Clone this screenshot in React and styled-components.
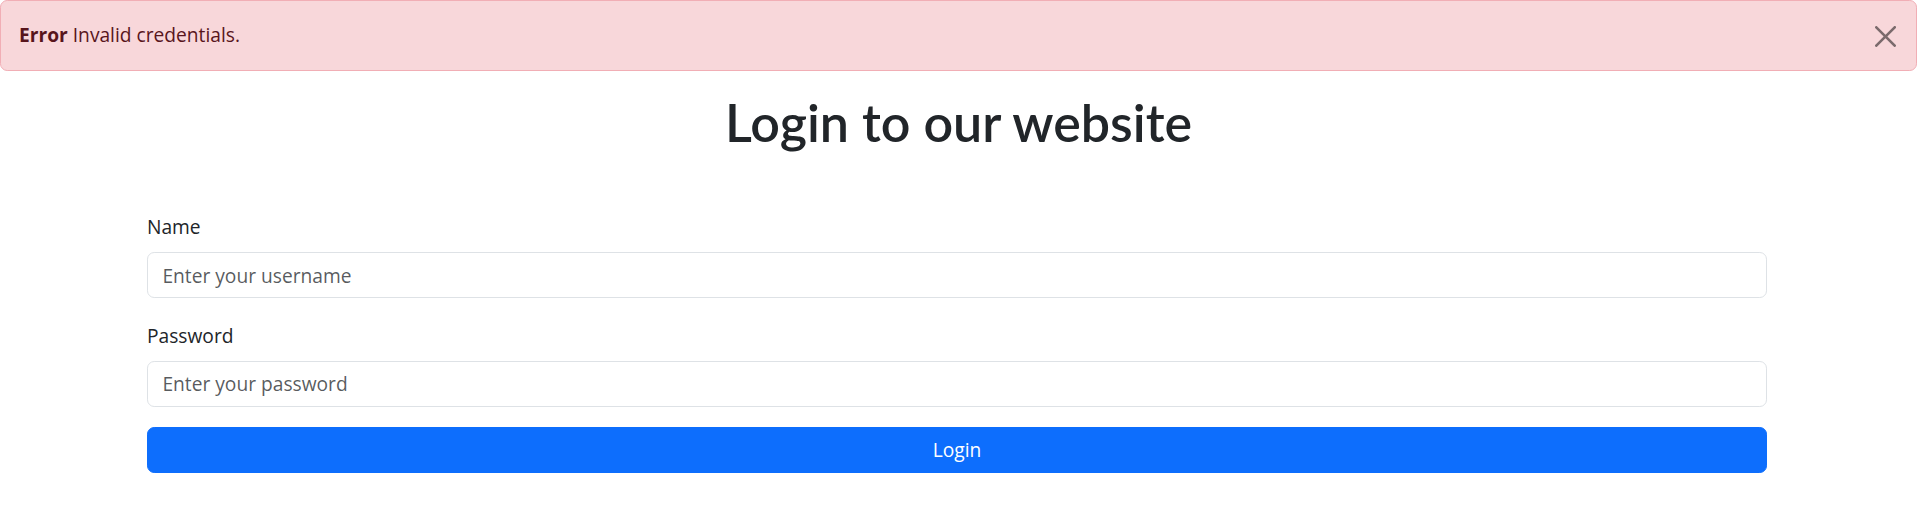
import React from 'react';
import styled, { createGlobalStyle } from 'styled-components';

const GlobalStyle = createGlobalStyle`
  * { box-sizing: border-box; }
  body {
    margin: 0;
    background: #fff;
    color: #212529;
    font-family: 'Open Sans', 'Noto Sans', sans-serif;
    font-size: 19.2px;
    line-height: 1.5;
  }
`;

const Alert = styled.div`
  position: relative;
  padding: 18px 58px 18px 18px;
  background-color: #f8d7da; // alert-danger
  border: 1px solid #f1aeb5;
  border-radius: 7.2px;
  color: #58151c;
  height: 71px;
  display: flex;
  align-items: center;
`;

const CloseButton = styled.button`
  position: absolute;
  top: 25px;
  right: 20px;
  width: 21px;
  height: 21px;
  padding: 0;
  border: 0;
  background: transparent;
  cursor: pointer;
  & svg {
    display: block;
    width: 21px;
    height: 21px;
    fill: #000;
    opacity: 0.5;
  }
`;

const Title = styled.h1`
  margin: 20px 0 0;
  text-align: center;
  font-family: Lato, 'Open Sans', sans-serif;
  font-size: 52px;
  font-weight: 600;
  line-height: 1.2;
  color: #212529;
`;

const Form = styled.form`
  margin: 60px 150px 0 147px;
  display: flex;
  flex-direction: column;
`;

const Field = styled.div`
  & + & {
    margin-top: 24px;
  }
`;

const Label = styled.label`
  display: block;
  margin-bottom: 10px;
`;

const Input = styled.input`
  display: block;
  width: 100%;
  height: 46px;
  padding: 7.2px 14.4px;
  font: inherit;
  color: #212529;
  border: 1px solid #dee2e6;
  border-radius: 7.2px;
  outline: none;

  &::placeholder {
    color: rgba(33, 37, 41, 0.75);
  }
`;

const SubmitButton = styled.button`
  margin-top: 20px;
  height: 46px;
  width: 100%;
  font: inherit;
  color: #fff;
  background-color: #0d6efd;
  border: 1px solid #0d6efd;
  border-radius: 7.2px;
  cursor: pointer;
`;

const App = () => {
  const submit = (e) => {
    e.preventDefault();
  };

  return (
    <>
      <GlobalStyle />
      <Alert role="alert">
        <span>
          <strong>Error</strong> Invalid credentials.
        </span>
        <CloseButton type="button" aria-label="Close">
          <svg viewBox="0 0 16 16">
            <path d="M.293.293a1 1 0 0 1 1.414 0L8 6.586 14.293.293a1 1 0 1 1 1.414 1.414L9.414 8l6.293 6.293a1 1 0 0 1-1.414 1.414L8 9.414l-6.293 6.293a1 1 0 0 1-1.414-1.414L6.586 8 .293 1.707a1 1 0 0 1 0-1.414z" />
          </svg>
        </CloseButton>
      </Alert>
      <Title>Login to our website</Title>
      <Form onSubmit={submit}>
        <Field>
          <Label htmlFor="username">Name</Label>
          <Input id="username" type="text" placeholder="Enter your username" />
        </Field>
        <Field>
          <Label htmlFor="password">Password</Label>
          <Input id="password" type="password" placeholder="Enter your password" />
        </Field>
        <SubmitButton type="submit">Login</SubmitButton>
      </Form>
    </>
  );
};

export default App;
